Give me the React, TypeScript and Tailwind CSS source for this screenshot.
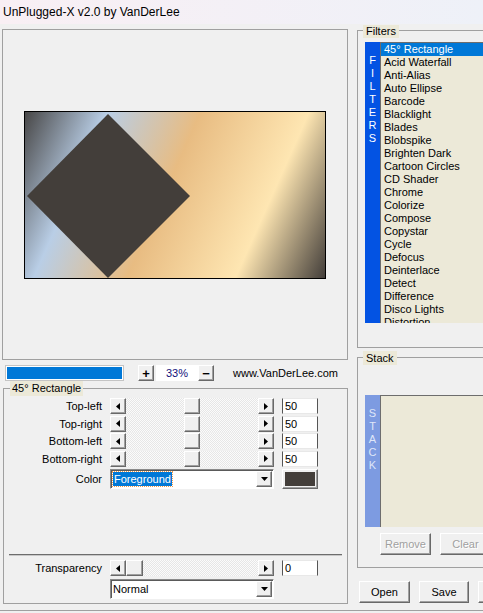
import React from "react";

const raised =
  "bg-[#f0f0f0] border border-t-white border-l-white border-r-[#696969] border-b-[#696969] shadow-[inset_-1px_-1px_0_#a0a0a0]";

function Tri({ dir }: { dir: "left" | "right" | "down" }) {
  if (dir === "left")
    return (
      <svg width="4" height="7" viewBox="0 0 4 7">
        <polygon points="4,0 4,7 0,3.5" fill="#000" />
      </svg>
    );
  if (dir === "right")
    return (
      <svg width="4" height="7" viewBox="0 0 4 7">
        <polygon points="0,0 0,7 4,3.5" fill="#000" />
      </svg>
    );
  return (
    <svg width="7" height="4" viewBox="0 0 7 4">
      <polygon points="0,0 7,0 3.5,4" fill="#000" />
    </svg>
  );
}

function ArrowBtn({ dir }: { dir: "left" | "right" }) {
  return (
    <div className={`w-[16px] h-[16px] shrink-0 flex items-center justify-center ${raised}`}>
      <Tri dir={dir} />
    </div>
  );
}

function Slider({ full }: { full?: boolean }) {
  return (
    <div className="flex h-[16px] w-[164px]">
      <ArrowBtn dir="left" />
      <div className="flex-1 flex bg-[repeating-conic-gradient(#e6e6e6_0_25%,#fbfbfb_0_50%)] bg-[length:2px_2px]">
        {full ? (
          <div className={`w-[17px] h-[16px] ${raised}`} />
        ) : (
          <div className={`ml-[58px] w-[16px] h-[16px] ${raised}`} />
        )}
      </div>
      <ArrowBtn dir="right" />
    </div>
  );
}

function Edit({ v }: { v: string }) {
  return (
    <div className="w-[36px] h-[16px] bg-white border border-l-[#555] border-r-[#555] border-t-[#e8e8e8] border-b-[#e8e8e8] pl-[2px] text-[11px] leading-[14px] text-black">
      {v}
    </div>
  );
}

function Row({ label, v }: { label: string; v: string }) {
  return (
    <div className="flex items-center h-[16px]">
      <div className="w-[98px] text-right text-[11px] leading-[16px] text-black">{label}</div>
      <div className="ml-[8px]">
        <Slider />
      </div>
      <div className="ml-[8px]">
        <Edit v={v} />
      </div>
    </div>
  );
}

function Combo({ children }: { children: React.ReactNode }) {
  return (
    <div className="w-[164px] h-[20px] bg-white border border-t-[#8a8a8a] border-l-[#8a8a8a] border-r-white border-b-white shadow-[inset_1px_1px_0_#5a5a5a] flex items-center pl-[2px] pr-[1px]">
      <div className="flex-1 flex items-center">{children}</div>
      <div className={`w-[16px] h-[16px] flex items-center justify-center ${raised}`}>
        <Tri dir="down" />
      </div>
    </div>
  );
}

const filters = [
  "45° Rectangle",
  "Acid Waterfall",
  "Anti-Alias",
  "Auto Ellipse",
  "Barcode",
  "Blacklight",
  "Blades",
  "Blobspike",
  "Brighten Dark",
  "Cartoon Circles",
  "CD Shader",
  "Chrome",
  "Colorize",
  "Compose",
  "Copystar",
  "Cycle",
  "Defocus",
  "Deinterlace",
  "Detect",
  "Difference",
  "Disco Lights",
  "Distortion",
];

export default function App() {
  return (
    <div className="w-[483px] h-[613px] overflow-hidden bg-[#f0f0f0] flex flex-col font-['Liberation_Sans',Arial,sans-serif] text-black">
      <div className="h-[24px] shrink-0 bg-[linear-gradient(to_right,#f9eff4,#eef1f8)] pl-[3px] flex items-center text-[12px] leading-[14px]">
        UnPlugged-X v2.0 by VanDerLee
      </div>
      <div className="flex pl-[2px]">
        {/* left column */}
        <div className="w-[346px] shrink-0 flex flex-col">
          <div className="mt-[5px] h-[331px] border border-[#a0a0a0] flex items-center justify-center">
            <div className="relative w-[302px] h-[168px] border border-black bg-[linear-gradient(114deg,#484747_0%,#b9cee6_22%,#e8bc82_47%,#fee6b2_76%,#433e3a_100%)]">
              <svg className="absolute left-0 top-0" width="300" height="166" viewBox="0 0 300 166">
                <polygon points="83,2 165,84 83,166 2,84" fill="#433e3a" />
              </svg>
            </div>
          </div>
          <div className="mt-[5px] h-[16px] flex items-center">
            <div className="ml-[3px] w-[119px] h-[16px] border border-[#c4c4c4] bg-white p-[1px]">
              <div className="w-full h-full bg-[#0078d7]" />
            </div>
            <div className={`ml-[14px] w-[16px] h-[16px] flex items-center justify-center text-[13px] leading-[13px] font-bold ${raised}`}>
              +
            </div>
            <div className="ml-[2px] w-[42px] h-[16px] bg-white flex items-center justify-center text-[11px] text-[#10107a]">
              33%
            </div>
            <div className={`w-[16px] h-[16px] flex items-center justify-center text-[13px] leading-[13px] font-bold ${raised}`}>
              −
            </div>
            <div className="ml-[19px] text-[11px] leading-[14px]">www.VanDerLee.com</div>
          </div>
          {/* group */}
          <div className="relative mt-[7px] ml-[1px] w-[345px] h-[216px] border border-[#a0a0a0] pt-[9px] flex flex-col">
            <div className="absolute left-[6px] -top-[8px] h-[15px] px-[2px] bg-[#ece9d8] text-[11px] leading-[15px]">
              45° Rectangle
            </div>
            <div className="flex flex-col gap-[1.5px]">
              <Row label="Top-left" v="50" />
              <Row label="Top-right" v="50" />
              <Row label="Bottom-left" v="50" />
              <Row label="Bottom-right" v="50" />
            </div>
            <div className="mt-[2.5px] flex items-center h-[20px]">
              <div className="w-[98px] text-right text-[11px] leading-[16px]">Color</div>
              <div className="ml-[8px]">
                <Combo>
                  <span className="bg-[#0078d7] text-white text-[11px] leading-[14px] px-[1px] outline outline-1 outline-dotted outline-[#f39a4a]">
                    Foreground
                  </span>
                </Combo>
              </div>
              <div className={`ml-[8px] w-[36px] h-[20px] p-[2px] ${raised}`}>
                <div className="w-full h-full bg-[#433e3a]" />
              </div>
            </div>
            <div className="mt-[65px] ml-[5px] w-[333px] h-[2px] border-t border-[#6d6d6d] bg-[#c8c8c8]" />
            <div className="mt-[4px] flex items-center h-[16px]">
              <div className="w-[98px] text-right text-[11px] leading-[16px]">Transparency</div>
              <div className="ml-[8px]">
                <Slider full />
              </div>
              <div className="ml-[8px]">
                <Edit v="0" />
              </div>
            </div>
            <div className="mt-[3px] ml-[106px]">
              <Combo>
                <span className="text-[11px] leading-[14px]">Normal</span>
              </Combo>
            </div>
          </div>
        </div>
        {/* right column */}
        <div className="ml-[9px] w-[140px] shrink-0 flex flex-col">
          <div className="relative mt-[6px] h-[318px] border border-[#a0a0a0] pt-[11px] pl-[7px]">
            <div className="absolute left-[5px] -top-[6px] h-[13px] px-[3px] bg-[#ece9d8] text-[11px] leading-[13px]">
              Filters
            </div>
            <div className="flex h-[281px]">
              <div className="w-[15px] shrink-0 bg-[#0353e3] flex flex-col items-center pt-[12px] text-white text-[11px] leading-[13px]">
                {"FILTERS".split("").map((c, i) => (
                  <span key={i}>{c}</span>
                ))}
              </div>
              <div className="flex-1 bg-[#ece9d8] border-l border-t border-[#6d6d6d] overflow-hidden flex flex-col">
                {filters.map((f, i) => (
                  <div
                    key={f}
                    className={`h-[13px] shrink-0 pl-[3px] whitespace-nowrap text-[11px] leading-[13px] ${
                      i === 0 ? "bg-[#0078d7] text-white" : "text-black"
                    }`}
                  >
                    {f}
                  </div>
                ))}
              </div>
            </div>
          </div>
          <div className="relative mt-[9px] h-[211px] border border-[#a0a0a0] flex flex-col">
            <div className="absolute left-[5px] -top-[7px] h-[14px] px-[3px] bg-[#ece9d8] text-[11px] leading-[14px]">
              Stack
            </div>
            <div className="mt-[37px] ml-[7px] flex h-[132px]">
              <div className="w-[15px] shrink-0 bg-[#7d9be1] flex flex-col items-center pt-[12px] text-[#dfe6f8] text-[11px] leading-[13px]">
                {"STACK".split("").map((c, i) => (
                  <span key={i}>{c}</span>
                ))}
              </div>
              <div className="flex-1 bg-[#ece9d8] border-l border-t border-[#6d6d6d]" />
            </div>
            <div className="mt-[6px] ml-[22px] flex gap-[9px]">
              <div className={`w-[51px] h-[22px] shrink-0 flex items-center justify-center text-[11px] text-[#a0a0a0] [text-shadow:1px_1px_0_#fff] ${raised}`}>
                Remove
              </div>
              <div className={`w-[51px] h-[22px] shrink-0 flex items-center justify-center text-[11px] text-[#a0a0a0] [text-shadow:1px_1px_0_#fff] ${raised}`}>
                Clear
              </div>
            </div>
          </div>
          <div className="mt-[13px] ml-[2px] flex gap-[9px]">
            <div className={`w-[51px] h-[22px] shrink-0 flex items-center justify-center text-[11px] ${raised}`}>Open</div>
            <div className={`w-[50px] h-[22px] shrink-0 flex items-center justify-center text-[11px] ${raised}`}>Save</div>
            <div className={`w-[51px] h-[22px] shrink-0 ${raised}`} />
          </div>
        </div>
      </div>
      <div className="mt-auto mb-[2px] h-[1px] bg-[#a0a0a0]" />
    </div>
  );
}
